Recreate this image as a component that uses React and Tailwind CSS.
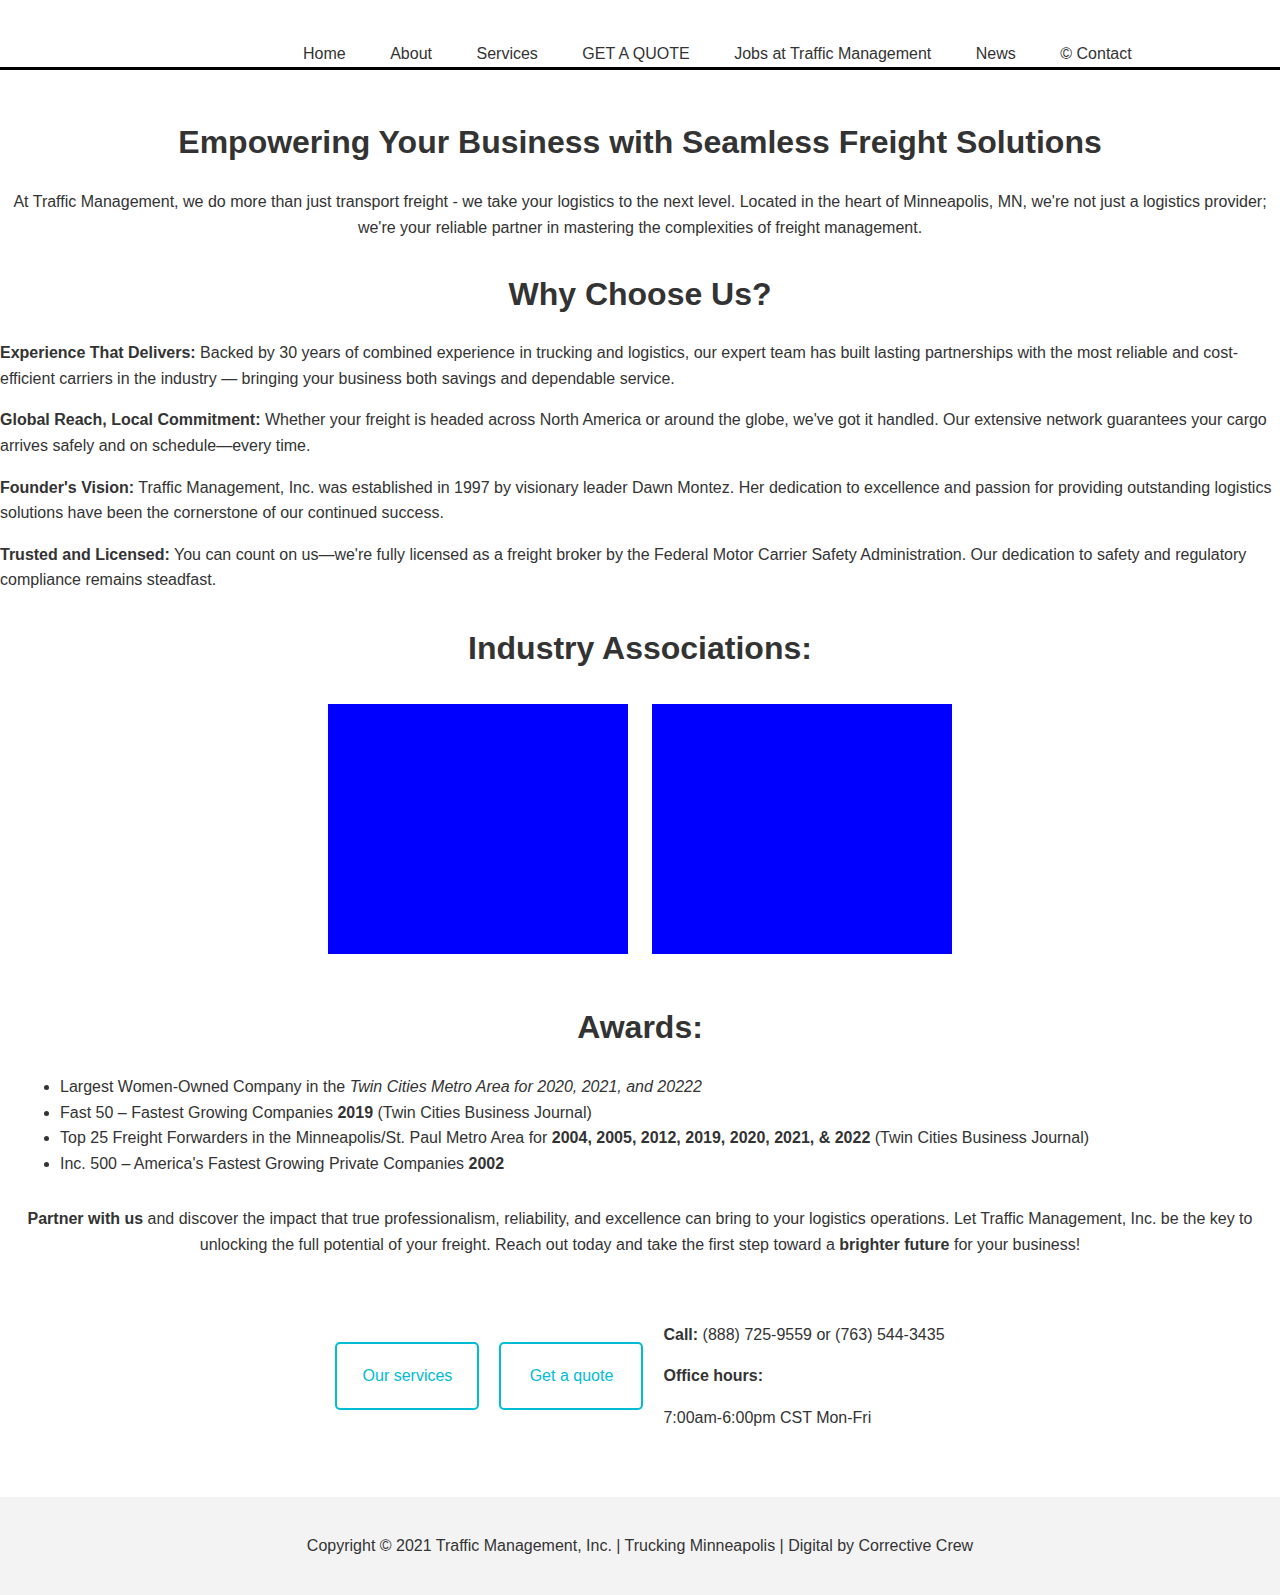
import React from 'react'

const NAV = ['Home', 'About', 'Services', 'GET A QUOTE', 'Jobs at Traffic Management', 'News', '© Contact']

const WHY = [
    { title: 'Experience That Delivers:', text: ' Backed by 30 years of combined experience in trucking and logistics, our expert team has built lasting partnerships with the most reliable and cost-efficient carriers in the industry — bringing your business both savings and dependable service.' },
    { title: 'Global Reach, Local Commitment:', text: " Whether your freight is headed across North America or around the globe, we've got it handled. Our extensive network guarantees your cargo arrives safely and on schedule—every time." },
    { title: "Founder's Vision:", text: ' Traffic Management, Inc. was established in 1997 by visionary leader Dawn Montez. Her dedication to excellence and passion for providing outstanding logistics solutions have been the cornerstone of our continued success.' },
    { title: 'Trusted and Licensed:', text: " You can count on us—we're fully licensed as a freight broker by the Federal Motor Carrier Safety Administration. Our dedication to safety and regulatory compliance remains steadfast." },
]

export default function App() {
    return (
        <div className="min-h-[1595px] bg-white text-[#333] text-[16px] leading-[25.6px]" style={{ fontFamily: '"Liberation Sans", Arial, sans-serif' }}>
            {/* Header nav */}
            <header className="h-[70px] border-b-[3px] border-black">
                <nav className="flex gap-[44.5px] pl-[303px] pt-[42px] leading-[24px]">
                    {NAV.map(item => (
                        <a key={item} className="text-[#333]">{item}</a>
                    ))}
                </nav>
            </header>

            <main>
                <h1 className="mt-[53px] text-center text-[32px] leading-[38px] font-bold">
                    Empowering Your Business with Seamless Freight Solutions
                </h1>
                <p className="mt-[28px] text-center">
                    At Traffic Management, we do more than just transport freight - we take your logistics to the next level. Located in the heart of Minneapolis, MN, we're not just a logistics provider; we're your reliable partner in mastering the complexities of freight management.
                </p>

                <h2 className="mt-[35px] text-center text-[32px] leading-[38px] font-bold">Why Choose Us?</h2>
                <div className="mt-[27px]">
                    {WHY.map(w => (
                        <p key={w.title} className="mb-[16px]">
                            <strong>{w.title}</strong>{w.text}
                        </p>
                    ))}
                </div>

                <h2 className="mt-[36px] text-center text-[32px] leading-[38px] font-bold">Industry Associations:</h2>
                <div className="mt-[37px] flex justify-center gap-[24px]">
                    <div className="w-[300px] h-[250px] bg-[#0000ff]" />
                    <div className="w-[300px] h-[250px] bg-[#0000ff]" />
                </div>

                <h2 className="mt-[54px] text-center text-[32px] leading-[38px] font-bold">Awards:</h2>
                <ul className="mt-[28px] list-disc pl-[60px]">
                    <li>Largest Women-Owned Company in the <em>Twin Cities Metro Area for 2020, 2021, and 20222</em></li>
                    <li>Fast 50 – Fastest Growing Companies <strong>2019</strong> (Twin Cities Business Journal)</li>
                    <li>Top 25 Freight Forwarders in the Minneapolis/St. Paul Metro Area for <strong>2004, 2005, 2012, 2019, 2020, 2021, &amp; 2022</strong> (Twin Cities Business Journal)</li>
                    <li>Inc. 500 – America's Fastest Growing Private Companies <strong>2002</strong></li>
                </ul>

                <p className="mt-[30px] text-center px-[20px]">
                    <strong>Partner with us</strong> and discover the impact that true professionalism, reliability, and excellence can bring to your logistics operations. Let Traffic Management, Inc. be the key to unlocking the full potential of your freight. Reach out today and take the first step toward a <strong>brighter future</strong> for your business!
                </p>

                {/* Call to action */}
                <div className="mt-[64px] flex justify-center items-center gap-[20px]">
                    <a className="w-[144px] h-[68px] flex items-center justify-center border-2 border-[#00bcd4] rounded-[5px] text-[#00bcd4]">Our services</a>
                    <a className="w-[144px] h-[68px] flex items-center justify-center border-2 border-[#00bcd4] rounded-[5px] text-[#00bcd4]">Get a quote</a>
                    <div>
                        <p className="mb-[16px]"><strong>Call:</strong> (888) 725-9559 or (763) 544-3435</p>
                        <p className="mb-[16px]"><strong>Office hours:</strong></p>
                        <p>7:00am-6:00pm CST Mon-Fri</p>
                    </div>
                </div>
            </main>

            <footer className="mt-[67px] h-[98px] bg-[#f3f3f3] flex items-center justify-center">
                <p>Copyright © 2021 Traffic Management, Inc. | Trucking Minneapolis | Digital by Corrective Crew</p>
            </footer>
        </div>
    )
}
